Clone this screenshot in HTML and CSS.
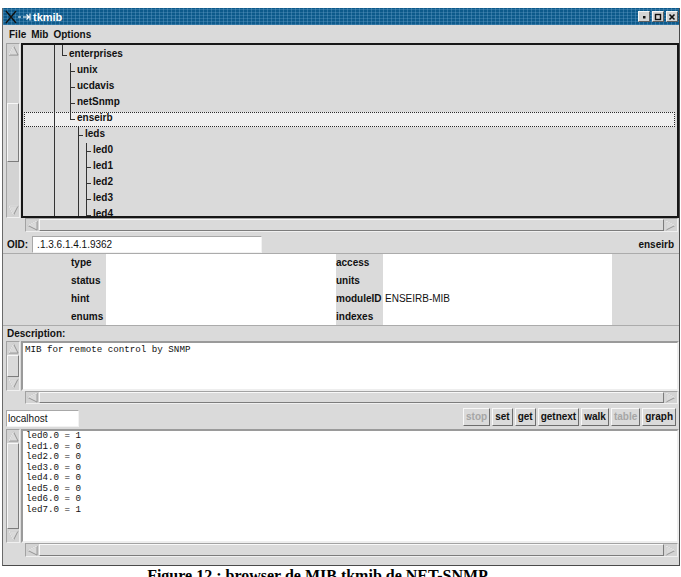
FILE: index.html
```html
<!DOCTYPE html>
<html>
<head>
<meta charset="utf-8">
<link rel="stylesheet" href="styles.css">
</head>
<body>
<div class="window">
  <div class="titlebar">
    <svg class="xlogo" viewBox="0 0 28 14">
      <path d="M2 1 L12 13 M12 1 L2 13" stroke="#111" stroke-width="1.4" fill="none"/>
      <path d="M14 7 H17 M19 7 H25 M22.5 4.5 L25 7 L22.5 9.5 M26 3.5 V10.5" stroke="#fff" stroke-width="1.2" fill="none"/>
    </svg>
    <span class="title">tkmib</span>
    <div class="wbtns">
      <span class="wbtn"><svg viewBox="0 0 8 8"><rect x="3" y="3" width="2.5" height="2.5" fill="#111"/></svg></span>
      <span class="wbtn"><svg viewBox="0 0 8 8"><rect x="1.5" y="1.5" width="5" height="5" fill="none" stroke="#111" stroke-width="1.4"/></svg></span>
      <span class="wbtn"><svg viewBox="0 0 8 8"><path d="M1.5 1.5 L6.5 6.5 M6.5 1.5 L1.5 6.5" stroke="#111" stroke-width="1.6"/></svg></span>
    </div>
  </div>
  <div class="menubar"><span>File</span><span>Mib</span><span>Options</span></div>

  <div class="pane tree-pane">
    <div class="scroll-row">
      <div class="vscroll">
        <span class="arr"><svg viewBox="0 0 12 12"><polygon points="6,1 11,11 1,11" fill="#dadada" stroke="#8e8e8e"/><polyline points="1,11 6,1" fill="none" stroke="#fbfbfb"/></svg></span>
        <span class="track"><span class="thumb"></span></span>
        <span class="arr"><svg viewBox="0 0 12 12"><polygon points="1,1 11,1 6,11" fill="#dadada" stroke="#8e8e8e"/><polyline points="11,1 1,1 6,11" fill="none" stroke="#fbfbfb"/></svg></span>
      </div>
      <div class="canvas tree">
        <i class="vl l0"></i><i class="vl l1"></i><i class="vl l2"></i><i class="vl l3"></i><i class="vl l4"></i>
        <div class="node d1">enterprises</div>
        <div class="node d2">unix</div>
        <div class="node d2">ucdavis</div>
        <div class="node d2">netSnmp</div>
        <div class="node d2 sel">enseirb</div>
        <div class="node d3">leds</div>
        <div class="node d4">led0</div>
        <div class="node d4">led1</div>
        <div class="node d4">led2</div>
        <div class="node d4">led3</div>
        <div class="node d4">led4</div>
      </div>
    </div>
    <div class="hscroll-row">
      <div class="hscroll">
        <span class="harr"><svg viewBox="0 0 12 12"><polygon points="1,6 11,1 11,11" fill="#dadada" stroke="#8e8e8e"/><polyline points="1,6 11,1" fill="none" stroke="#fbfbfb"/></svg></span>
        <span class="htrack"><span class="hthumb"></span></span>
        <span class="harr"><svg viewBox="0 0 12 12"><polygon points="1,1 11,6 1,11" fill="#dadada" stroke="#8e8e8e"/><polyline points="1,11 1,1 11,6" fill="none" stroke="#fbfbfb"/></svg></span>
      </div>
    </div>
  </div>

  <div class="oid-row">
    <span class="lbl">OID:</span>
    <span class="entry oid">.1.3.6.1.4.1.9362</span>
    <span class="lbl node-name">enseirb</span>
  </div>

  <div class="fields">
    <span class="flabel">type</span><span class="fval"></span><span class="flabel2">access</span><span class="fval2"></span><span class="fpad"></span>
    <span class="flabel">status</span><span class="fval"></span><span class="flabel2">units</span><span class="fval2"></span><span class="fpad"></span>
    <span class="flabel">hint</span><span class="fval"></span><span class="flabel2">moduleID</span><span class="fval2">ENSEIRB-MIB</span><span class="fpad"></span>
    <span class="flabel">enums</span><span class="fval"></span><span class="flabel2">indexes</span><span class="fval2"></span><span class="fpad"></span>
  </div>

  <div class="desc-label">Description:</div>

  <div class="pane desc-pane">
    <div class="scroll-row">
      <div class="vscroll">
        <span class="arr"><svg viewBox="0 0 12 12"><polygon points="6,1 11,11 1,11" fill="#dadada" stroke="#8e8e8e"/><polyline points="1,11 6,1" fill="none" stroke="#fbfbfb"/></svg></span>
        <span class="track"><span class="thumb fill"></span></span>
        <span class="arr"><svg viewBox="0 0 12 12"><polygon points="1,1 11,1 6,11" fill="#dadada" stroke="#8e8e8e"/><polyline points="11,1 1,1 6,11" fill="none" stroke="#fbfbfb"/></svg></span>
      </div>
      <div class="canvas text">MIB for remote control by SNMP</div>
    </div>
    <div class="hscroll-row">
      <div class="hscroll">
        <span class="harr"><svg viewBox="0 0 12 12"><polygon points="1,6 11,1 11,11" fill="#dadada" stroke="#8e8e8e"/><polyline points="1,6 11,1" fill="none" stroke="#fbfbfb"/></svg></span>
        <span class="htrack"><span class="hthumb"></span></span>
        <span class="harr"><svg viewBox="0 0 12 12"><polygon points="1,1 11,6 1,11" fill="#dadada" stroke="#8e8e8e"/><polyline points="1,11 1,1 11,6" fill="none" stroke="#fbfbfb"/></svg></span>
      </div>
    </div>
  </div>

  <div class="cmd-row">
    <span class="entry host">localhost</span>
    <div class="btns">
      <span class="btn off">stop</span>
      <span class="btn">set</span>
      <span class="btn">get</span>
      <span class="btn">getnext</span>
      <span class="btn">walk</span>
      <span class="btn off">table</span>
      <span class="btn">graph</span>
    </div>
  </div>

  <div class="pane out-pane">
    <div class="scroll-row">
      <div class="vscroll">
        <span class="arr"><svg viewBox="0 0 12 12"><polygon points="6,1 11,11 1,11" fill="#dadada" stroke="#8e8e8e"/><polyline points="1,11 6,1" fill="none" stroke="#fbfbfb"/></svg></span>
        <span class="track"><span class="thumb fill"></span></span>
        <span class="arr"><svg viewBox="0 0 12 12"><polygon points="1,1 11,1 6,11" fill="#dadada" stroke="#8e8e8e"/><polyline points="11,1 1,1 6,11" fill="none" stroke="#fbfbfb"/></svg></span>
      </div>
      <div class="canvas text out">led0.0 = 1
led1.0 = 0
led2.0 = 0
led3.0 = 0
led4.0 = 0
led5.0 = 0
led6.0 = 0
led7.0 = 1</div>
    </div>
    <div class="hscroll-row">
      <div class="hscroll">
        <span class="harr"><svg viewBox="0 0 12 12"><polygon points="1,6 11,1 11,11" fill="#dadada" stroke="#8e8e8e"/><polyline points="1,6 11,1" fill="none" stroke="#fbfbfb"/></svg></span>
        <span class="htrack"><span class="hthumb"></span></span>
        <span class="harr"><svg viewBox="0 0 12 12"><polygon points="1,1 11,6 1,11" fill="#dadada" stroke="#8e8e8e"/><polyline points="1,11 1,1 11,6" fill="none" stroke="#fbfbfb"/></svg></span>
      </div>
    </div>
  </div>
</div>
<div class="caption">Figure 12 : browser de MIB tkmib de NET-SNMP</div>
</body>
</html>
```

FILE: styles.css
```css
* { box-sizing: border-box; }

body {
  margin: 0;
  width: 681px;
  height: 577px;
  overflow: hidden;
  background: #fff;
  font-family: "Liberation Sans", Arial, sans-serif;
  font-size: 10px;
  color: #111;
}

.window {
  margin: 8px 0 0 2px;
  width: 678px;
  background: #dadada;
  border: 1px solid #4a4a4a;
  border-top: 0;
  border-left-color: #6a6a6a;
  padding-bottom: 8px;
}

/* title bar */
.titlebar {
  height: 17px;
  display: flex;
  align-items: center;
  padding-left: 0;
  color: #fff;
  background-color: #0d5a8b;
  background-image:
    repeating-linear-gradient(90deg, rgba(110,165,205,0.35) 0 1px, transparent 1px 4px),
    repeating-linear-gradient(0deg, rgba(110,165,205,0.30) 0 1px, transparent 1px 3px);
}
.xlogo { width: 28px; height: 14px; margin-left: 1px; }
.title { font-weight: bold; font-size: 11px; margin-left: 1px; }
.wbtns { margin-left: auto; display: flex; gap: 2px; padding-right: 1px; }
.wbtn {
  width: 12px;
  height: 11px;
  background: #d4d4d4;
  border: 1px solid;
  border-color: #f6f6f6 #5e5e5e #5e5e5e #f6f6f6;
  display: flex;
  align-items: center;
  justify-content: center;
}
.wbtn svg { width: 8px; height: 8px; }

/* menu */
.menubar {
  height: 18px;
  display: flex;
  align-items: center;
  gap: 5px;
  padding-left: 6px;
  font-weight: bold;
}

/* panes with scrollbars */
.pane { padding-left: 3px; }
.scroll-row { display: flex; }
.tree-pane .scroll-row { height: 175px; }
.desc-pane .scroll-row { height: 50px; }
.out-pane .scroll-row { height: 114px; }

.vscroll {
  width: 14px;
  flex: none;
  margin-right: 1px;
  display: flex;
  flex-direction: column;
  background: #d3d3d3;
  border: 1px solid;
  border-color: #a2a2a2 #f0f0f0 #f0f0f0 #a2a2a2;
}
.arr {
  height: 13px;
  flex: none;
  display: flex;
  align-items: center;
  justify-content: center;
}
.arr svg { width: 11px; height: 11px; }
.track { flex: 1; display: flex; flex-direction: column; }
.thumb {
  background: #dadada;
  border: 1px solid;
  border-color: #f8f8f8 #7c7c7c #7c7c7c #f8f8f8;
}
.tree-pane .thumb { margin-top: 46px; height: 59px; }
.thumb.fill { flex: 1; }

.hscroll-row { padding-left: 19px; padding-right: 1px; height: 14px; }
.hscroll {
  height: 14px;
  display: flex;
  background: #d3d3d3;
  border: 1px solid;
  border-color: #a2a2a2 #f0f0f0 #f0f0f0 #a2a2a2;
}
.desc-pane .hscroll-row, .desc-pane .hscroll { height: 13px; }
.harr {
  width: 13px;
  flex: none;
  display: flex;
  align-items: center;
  justify-content: center;
}
.harr svg { width: 11px; height: 11px; }
.htrack { flex: 1; display: flex; }
.hthumb {
  flex: 1;
  background: #dadada;
  border: 1px solid;
  border-color: #f8f8f8 #7c7c7c #7c7c7c #f8f8f8;
}

.canvas {
  flex: 1;
  position: relative;
  overflow: hidden;
}
.tree {
  z-index: 0;
  background: #dadada;
  border: 2px solid #161616;
  padding-top: 1px;
  font-weight: bold;
}
.text {
  background: #fff;
  border: 2px solid;
  border-color: #9a9a9a #eeeeee #eeeeee #9a9a9a;
  font-family: "Liberation Mono", "DejaVu Sans Mono", monospace;
  font-size: 9.2px;
  line-height: 10.5px;
  white-space: pre;
  padding: 2px 0 0 2px;
  color: #111;
}
.text.out { padding: 0 0 0 3px; }

/* tree drawing */
.vl { position: absolute; width: 1px; background: #333; }
.l0 { left: 31px; top: 0; bottom: 0; }
.l1 { left: 39px; top: 0; height: 11px; }
.l2 { left: 47px; top: 18px; height: 57px; }
.l3 { left: 55px; top: 82px; bottom: 0; }
.l4 { left: 63px; top: 98px; bottom: 0; }

.node { height: 16px; line-height: 16px; position: relative; white-space: nowrap; }
.node::before {
  content: "";
  position: absolute;
  top: 9px;
  width: 5px;
  height: 1px;
  background: #333;
}
.d1 { padding-left: 46px; }
.d1::before { left: 39px; }
.d2 { padding-left: 54px; }
.d2::before { left: 47px; }
.d3 { padding-left: 62px; }
.d3::before { left: 55px; }
.d4 { padding-left: 70px; }
.d4::before { left: 63px; }
.sel::after {
  content: "";
  position: absolute;
  left: 1px;
  right: 2px;
  top: 2px;
  bottom: -1px;
  border: 1px dotted #2a2a2a;
  background: #efefef;
  z-index: -1;
}

/* OID row */
.oid-row {
  height: 21px;
  display: flex;
  align-items: center;
  padding: 3px 5px 0 4px;
}
.lbl { font-weight: bold; }
.entry {
  height: 17px;
  line-height: 15px;
  background: #fff;
  border: 1px solid;
  border-color: #a8a8a8 #f2f2f2 #f2f2f2 #a8a8a8;
  white-space: nowrap;
}
.oid { width: 230px; margin-left: 4px; padding-left: 4px; }
.node-name { margin-left: auto; }

/* fields */
.fields {
  height: 73px;
  display: grid;
  grid-template-columns: 103px 230px 47px 229px 1fr;
  grid-template-rows: repeat(4, 1fr);
  border-top: 1px solid #ababab;
  border-bottom: 1px solid #ababab;
  align-items: stretch;
}
.fields > span { display: flex; align-items: center; }
.flabel { font-weight: bold; padding-left: 68px; }
.fval { background: #fff; }
.flabel2 { font-weight: bold; padding-left: 0; }
.fval2 { background: #fff; padding-left: 2px; }

.desc-label {
  height: 15px;
  line-height: 15px;
  padding-left: 4px;
  font-weight: bold;
}

/* command row */
.cmd-row {
  height: 25px;
  display: flex;
  align-items: flex-start;
  padding: 4px 3px 0 3px;
}
.host { width: 73px; margin-top: 2px; padding-left: 1px; }
.btns { margin-left: auto; display: flex; gap: 2px; }
.btn {
  height: 18px;
  line-height: 16px;
  padding: 0 2px;
  font-weight: bold;
  background: #dadada;
  border: 1px solid;
  border-color: #f8f8f8 #6c6c6c #6c6c6c #f8f8f8;
}
.btn.off { color: #a6a6a6; }

.out-pane { padding-bottom: 0; }

.caption {
  width: 635px;
  margin-top: 1px;
  text-align: center;
  font-family: "Liberation Serif", "Times New Roman", serif;
  font-weight: bold;
  font-size: 16px;
  color: #000;
}
```
